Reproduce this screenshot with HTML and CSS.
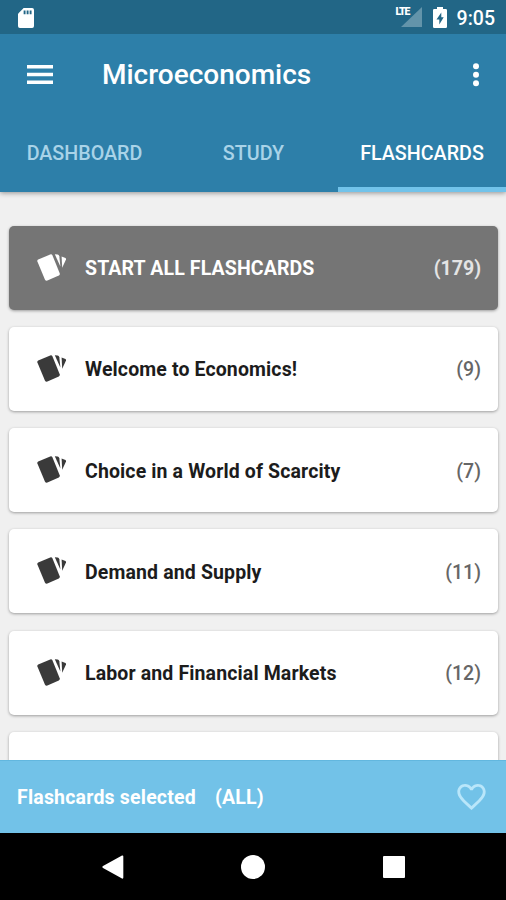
FILE: index.html
```html
<!DOCTYPE html>
<html lang="en">
<head>
  <meta charset="UTF-8" />
  <meta name="viewport" content="width=device-width, initial-scale=1.0" />
  <title>Microeconomics</title>
  <link rel="stylesheet" href="styles.css">
</head>
<body>
  <svg class="defs" width="0" height="0">
    <symbol id="cards" viewBox="0 0 32 30">
      <path d="M2.2 6.4 14.2 1.4Q15.800.9 16.500 2.400L23.700 20.2Q24.200 21.8 22.800 22.5L11.4 27.6Q9.8 28.1 9 26.700L1.4 8.4Q1 7 2.2 6.4Z"/>
      <path d="M18.800 1.200 21.600 1.600Q22.900 1.900 23.300 3.200L24.400 13.500Z"/>
      <path d="M25.600 3.500 29.500 4.900Q30.300 5.400 30 6.500L26.200 14.800Z"/>
    </symbol>
  </svg>

  <header>
    <div class="status">
      <svg class="sd" viewBox="0 0 17 21"><path d="M6 0H15Q17 0 17 2V19Q17 21 15 21H2Q0 21 0 19V6Z"/><path class="slots" d="M6 2.6h2v4H6zM9.2 2.6h2v4h-2zM12.4 2.6h2v4h-2z"/></svg>
      <div class="signal">
        <svg viewBox="0 0 21 20"><path d="M21 0V20H0Z"/></svg>
        <span>LTE</span>
      </div>
      <svg class="battery" viewBox="0 0 14 21"><path d="M4 0h6v2h2.700q1.300 0 1.300 1.300v16.400q0 1.300-1.300 1.300H1.300Q0 21 0 19.700V3.300Q0 2 1.300 2H4z"/><path class="bolt" d="M8.300 5.500 3.500 12.500H6.300V17.500L10.700 10.300H8.300Z"/></svg>
      <span class="time">9:05</span>
    </div>
    <div class="toolbar">
      <svg class="menu" viewBox="0 0 26 20"><path d="M0 0H26V3.600H0zM0 7.700H26V11.300H0zM0 15.400H26V19H0z"/></svg>
      <h1>Microeconomics</h1>
      <svg class="more" viewBox="0 0 6 24"><circle cx="3" cy="3.200" r="3"/><circle cx="3" cy="11.700" r="3"/><circle cx="3" cy="20.200" r="3"/></svg>
    </div>
    <nav class="tabs">
      <a>DASHBOARD</a>
      <a>STUDY</a>
      <a class="active">FLASHCARDS</a>
    </nav>
  </header>

  <main>
    <div class="card all">
      <svg><use href="#cards"/></svg>
      <span class="name">START ALL FLASHCARDS</span>
      <span class="count">(179)</span>
    </div>
    <div class="card">
      <svg><use href="#cards"/></svg>
      <span class="name">Welcome to Economics!</span>
      <span class="count">(9)</span>
    </div>
    <div class="card">
      <svg><use href="#cards"/></svg>
      <span class="name">Choice in a World of Scarcity</span>
      <span class="count">(7)</span>
    </div>
    <div class="card">
      <svg><use href="#cards"/></svg>
      <span class="name">Demand and Supply</span>
      <span class="count">(11)</span>
    </div>
    <div class="card">
      <svg><use href="#cards"/></svg>
      <span class="name">Labor and Financial Markets</span>
      <span class="count">(12)</span>
    </div>
    <div class="card"></div>
  </main>

  <div class="selected">
    <span class="label">Flashcards selected</span>
    <span class="which">(ALL)</span>
    <svg class="heart" viewBox="2 3 20 18.350"><path d="M16.500 3c-1.740 0-3.410.81-4.500 2.090C10.910 3.810 9.240 3 7.500 3 4.420 3 2 5.420 2 8.500c0 3.780 3.400 6.860 8.550 11.540L12 21.350l1.450-1.320C18.600 15.360 22 12.280 22 8.500 22 5.420 19.580 3 16.500 3zm-4.400 15.550l-.1.100-.1-.1C7.140 14.240 4 11.390 4 8.500 4 6.500 5.500 5 7.500 5c1.540 0 3.040.99 3.570 2.360h1.870C13.460 5.990 14.960 5 16.500 5c2 0 3.500 1.500 3.500 3.500 0 2.890-3.140 5.740-7.900 10.050z"/></svg>
  </div>

  <footer>
    <svg class="back" viewBox="0 0 22 24"><path d="M20 .5Q21.300 0 21.300 1.500V22.500Q21.300 24 20 23.500L1 13Q-.3 12 1 11Z"/></svg>
    <div class="home"></div>
    <div class="recent"></div>
  </footer>
</body>
</html>
```

FILE: styles.css
```css
* {
  margin: 0;
  padding: 0;
  box-sizing: border-box;
}

body {
  height: 900px;
  display: flex;
  flex-direction: column;
  overflow: hidden;
  background: #f0f0f0;
  font-family: Roboto, "Liberation Sans", sans-serif;
  font-weight: 500;
}

svg {
  display: block;
  flex: none;
  fill: #fff;
}

.defs {
  position: absolute;
}

header {
  flex: none;
  height: 191.5px;
  background: #2d7fa9;
  color: #fff;
  box-shadow: 0 1px 5px rgba(0, 0, 0, 0.4);
  z-index: 1;
}

.status {
  height: 34px;
  padding: 0 11px 0 18px;
  display: flex;
  align-items: center;
  background: #226686;
}

.sd {
  width: 16px;
  height: 20px;
  margin-top: 1px;
}

.slots, .bolt {
  fill: #226686;
}

.signal {
  position: relative;
  margin-left: auto;
}

.signal svg {
  width: 21px;
  height: 20px;
  fill: #6394aa;
}

.signal span {
  position: absolute;
  left: -5px;
  top: -1px;
  font-size: 10.5px;
  line-height: 12px;
  font-weight: 900;
  letter-spacing: -1.2px;
}

.battery {
  width: 14px;
  height: 21px;
  margin: 1px 10px 0 11px;
}

.time {
  font-size: 19.5px;
  line-height: 34px;
  padding-top: 3px;
}

.toolbar {
  height: 81px;
  padding: 0 27px;
  display: flex;
  align-items: center;
}

.menu {
  width: 26px;
  height: 20px;
}

h1 {
  flex: 1;
  margin-left: 49px;
  font-size: 28px;
  font-weight: 500;
}

.more {
  width: 6px;
  height: 24px;
}

.tabs {
  height: 76.5px;
  display: grid;
  grid-template-columns: 1fr 1fr 168px;
}

.tabs a {
  padding-top: 5px;
  text-align: center;
  font-size: 19.7px;
  line-height: 67px;
  color: #a9d3e8;
}

.tabs .active {
  color: #fff;
  border-bottom: 5.5px solid #72c3ea;
}

main {
  flex: 1;
  min-height: 0;
  overflow: hidden;
  padding: 34px 8px 0 9px;
  display: flex;
  flex-direction: column;
  gap: 17.25px;
}

.card {
  flex: none;
  height: 84px;
  padding: 2px 17px 0 27px;
  display: flex;
  align-items: center;
  border-radius: 5px;
  background: #fff;
  box-shadow: 0 1px 3px rgba(0, 0, 0, 0.35);
  font-size: 19.5px;
  color: #1c1c1c;
}

.card svg {
  width: 32px;
  height: 30px;
  margin-bottom: 2px;
  fill: #3a3a3a;
}

.name {
  flex: 1;
  margin-left: 17px;
  font-weight: 700;
  letter-spacing: 0.13px;
}

.count {
  color: #666;
}

.all {
  background: #757575;
  color: #fff;
}

.all svg {
  fill: #fff;
}

.all .count {
  color: #e4e4e4;
  font-weight: 700;
}

.selected {
  flex: none;
  height: 73px;
  padding: 0 20px 0 17px;
  display: flex;
  align-items: center;
  background: #72c2e8;
  border-top: 1px solid #62b7df;
  color: #fff;
  font-size: 19.5px;
  font-weight: 700;
  letter-spacing: 0.2px;
}

.which {
  margin-left: 19px;
}

.heart {
  width: 29px;
  height: 26px;
  margin-left: auto;
  fill: #b9e6fa;
}

footer {
  flex: none;
  height: 67px;
  display: flex;
  align-items: center;
  justify-content: center;
  background: #000;
}

.back {
  width: 22px;
  height: 24px;
}

.home {
  width: 24px;
  height: 24px;
  margin: 0 118px 0 117px;
  border-radius: 50%;
  background: #fff;
}

.recent {
  width: 22px;
  height: 22px;
  border-radius: 1px;
  background: #fff;
}
```
